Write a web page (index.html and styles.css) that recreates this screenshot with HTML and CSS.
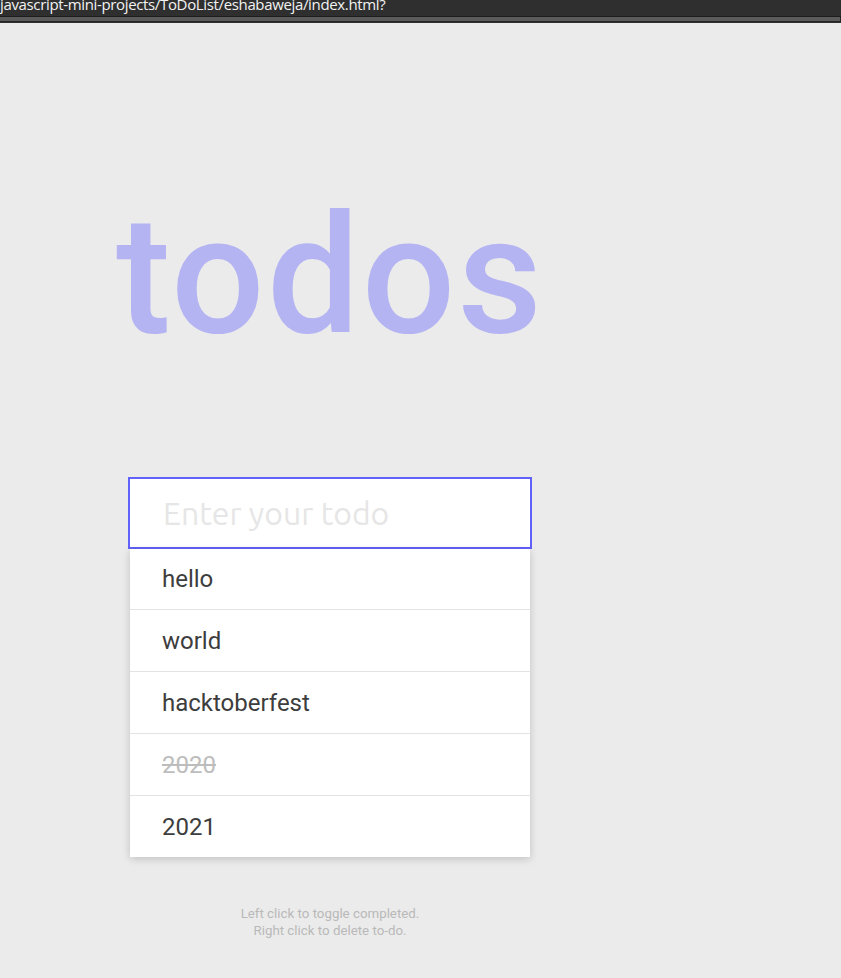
FILE: index.html
```html
<!DOCTYPE html>
<html>
<head>
<meta charset="utf-8">
<link rel="stylesheet" href="styles.css">
<title>todos</title>
</head>
<body>
<div class="chrome">
  <div class="urlbar"><span class="url">javascript-mini-projects/ToDoList/eshabaweja/index.html?</span></div>
  <div class="strip"></div>
</div>
<main class="page">
  <h1 class="title">todos</h1>
  <div class="app">
    <input class="entry" type="text" placeholder="Enter your todo">
    <ul class="list">
      <li class="item">hello</li>
      <li class="item">world</li>
      <li class="item">hacktoberfest</li>
      <li class="item done">2020</li>
      <li class="item">2021</li>
    </ul>
  </div>
  <p class="hint">Left click to toggle completed.<br>Right click to delete to-do.</p>
</main>
</body>
</html>
```
FILE: styles.css
```css
html, body {
  margin: 0;
  padding: 0;
  background: #ebebeb;
  height: 100%;
  overflow: hidden;
}
.chrome {
  height: 23px;
  background: #2f2f2f;
  display: flex;
  flex-direction: column;
}
.urlbar {
  height: 17px;
  overflow: hidden;
  border-bottom: 1px solid #1c1c1c;
  box-sizing: border-box;
}
.url {
  display: block;
  margin-top: -6px;
  font-family: "Open Sans", "DejaVu Sans", sans-serif;
  font-size: 15px;
  letter-spacing: -0.35px;
  line-height: 20px;
  color: #f2f2f2;
  white-space: nowrap;
}
.strip {
  height: 4px;
  background: #5b5b5b;
  border-bottom: 1px solid #262626;
  border-right: 1px solid #262626;
}
.page {
  padding-left: 128px;
  font-family: Roboto, "Liberation Sans", sans-serif;
}
.title {
  margin: 0 0 0 -12px;
  padding-top: 170px;
  height: 310px;
  box-sizing: border-box;
  font-family: Roboto, sans-serif;
  font-weight: 500;
  font-size: 165px;
  line-height: 1;
  letter-spacing: 2px;
  color: #b5b4f3;
}
.app {
  width: 404px;
  margin-top: 144px;
}
.entry {
  display: block;
  width: 404px;
  height: 72px;
  box-sizing: border-box;
  margin: 0;
  border: 2px solid #6161fb;
  outline: none;
  background: #fff;
  padding: 0 0 0 33px;
  font-family: "Ubuntu", "Open Sans", sans-serif;
  font-size: 32px;
  color: #333;
}
.entry::placeholder {
  color: #e6e6e6;
}
.list {
  list-style: none;
  margin: 0 0 0 2px;
  padding: 0;
  width: 400px;
  background: #fff;
  box-shadow: 0 2px 8px rgba(0, 0, 0, 0.18);
}
.item {
  height: 62px;
  box-sizing: border-box;
  border-top: 1px solid #e3e3e3;
  padding-left: 32px;
  display: flex;
  align-items: center;
  font-size: 24px;
  color: #3d3d3d;
}
.item:first-child {
  border-top: none;
  height: 60px;
}
.item.done {
  color: #bdbdbd;
  text-decoration: line-through;
}
.hint {
  width: 404px;
  margin: 48px 0 0 0;
  text-align: center;
  font-size: 13.3px;
  line-height: 17px;
  color: #b9b9b9;
}
```
